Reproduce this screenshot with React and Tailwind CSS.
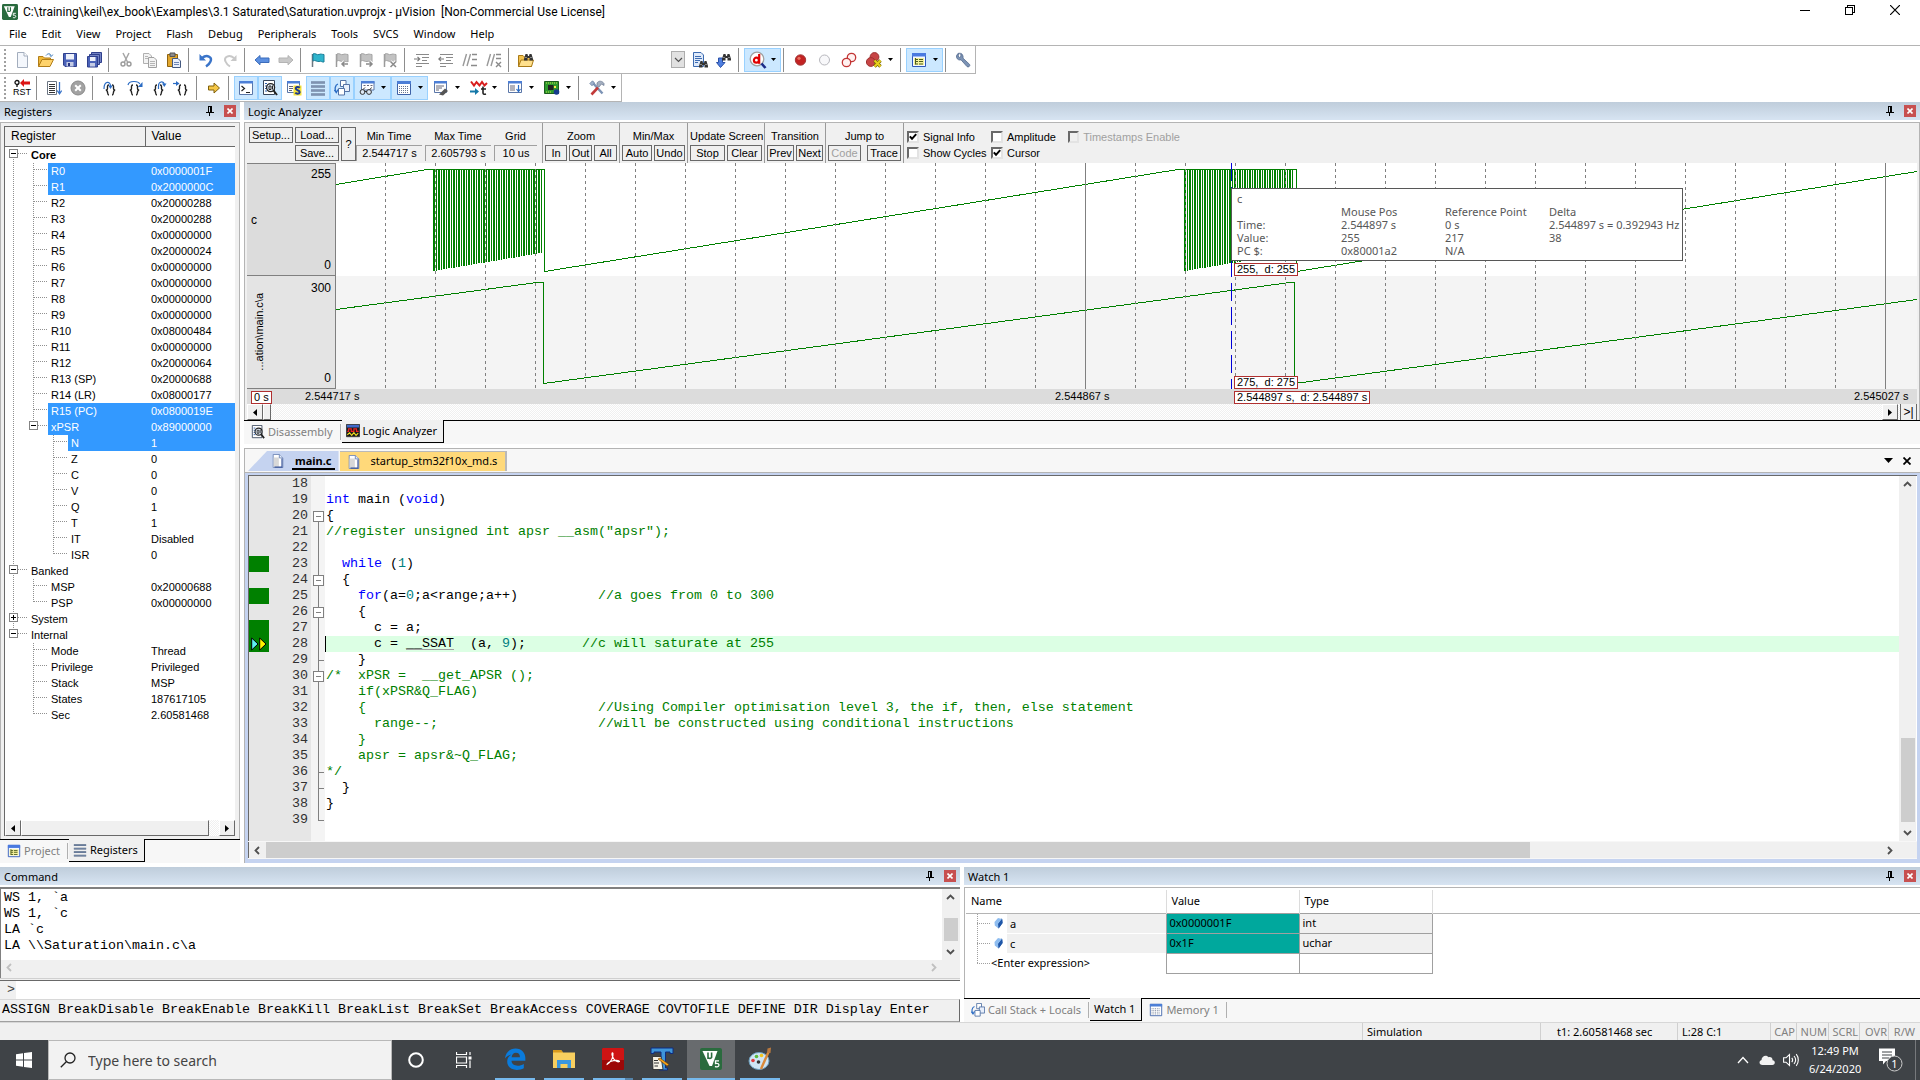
import React from "react";

/* ---------- toolbar icons, 16 x 16 ---------- */

const Svg = ({ children, className = "h-4 w-4" }) => (
  <svg viewBox="0 0 16 16" className={className} fill="none" aria-hidden="true">
    {children}
  </svg>
);

const Flag = ({ dim, mark }) => (
  <Svg>
    <path d="M2.5 2 V15" stroke={dim ? "#9a9a9a" : "#6b7780"} strokeWidth="1.5" />
    <path
      d="M3 2 C5 0.5 7 3.5 9 2.5 C11 1.5 12 2.5 14 2.5 V10 C12 10.5 11 8.5 9 9.5 C7 10 5 7.5 3 9 Z"
      fill={dim ? "#c2c2c2" : "#2fb4cc"}
      stroke={dim ? "#a4a4a4" : "#1c7f99"}
    />
    {mark && <path d={mark} stroke="#fff" strokeWidth="3.5" />}
    {mark && <path d={mark} stroke="#8a8a8a" strokeWidth="1.5" />}
  </Svg>
);

const Lines = ({ arrow }) => (
  <Svg>
    <path d="M2 2.5H15M8 5.5H15M8 8.5H13M2 11.5H15M2 14.5H8" stroke="#8a8a8a" />
    <path d={arrow} stroke="#7a7a7a" strokeWidth="1.2" />
  </Svg>
);

const Braces = ({ arrow, head }) => (
  <svg viewBox="0 0 18 16" className="h-4 w-[18px] shrink-0" fill="none" aria-hidden="true">
    <path
      d="M8 5 C5.5 5 7 8.5 6.3 9.4 C6 9.8 5.5 10 4.8 10 C7.8 10.2 5.5 15 8 15 M11 5 C13.5 5 12 8.5 12.7 9.4 C13 9.8 13.5 10 14.2 10 C11.2 10.2 13.5 15 11 15"
      stroke="#222"
      strokeWidth="1.4"
    />
    <path d={arrow} stroke="#2b6cc4" strokeWidth="1.2" />
    <path d={head} fill="#2b6cc4" />
  </svg>
);

const Binoc = ({ x = 0, y = 0 }) => (
  <g transform={"translate(" + x + " " + y + ")"}>
    <path d="M0 6 L1.5 1 H3.5 L4 3 H5 L5.5 1 H7.5 L9 6 V7.5 H5.5 V5 H3.5 V7.5 H0 Z" fill="#333" />
    <path d="M1.5 4.5 H2.5 M6.5 4.5 H7.5" stroke="#ddd" />
  </g>
);

const I = {
  fresh: (
    <Svg>
      <path d="M3.5 0.5 H10 L13.5 4 V15.5 H3.5 Z" fill="#f4f7fc" stroke="#a3adbd" />
      <path d="M10 0.5 V4 H13.5" stroke="#a3adbd" fill="#fff" />
    </Svg>
  ),
  open: (
    <Svg>
      <path d="M0.5 14.5 V4.5 H5 L6.5 6 H12.5 V8" fill="#f0b93a" stroke="#b17d18" />
      <path d="M0.5 14.5 L4 7.5 H15.5 L12 14.5 Z" fill="#ffd36b" stroke="#b17d18" />
      <path d="M8 3.5 C10 1 12.5 1.5 13 3.5 M11.5 3 L13.2 4.6 L14.8 2.6" stroke="#3c79b8" />
    </Svg>
  ),
  save: (
    <Svg>
      <path d="M1.5 1.5 H14.5 V14.5 H3 L1.5 13 Z" fill="#4a62b8" stroke="#2f3f8c" />
      <path d="M4 2 H12 V7.5 H4 Z" fill="#eef1fa" />
      <path d="M4.5 10 H11.5 V14.5 H4.5 Z" fill="#c4cbe4" />
      <path d="M6 11 H8 V14 H6 Z" fill="#27347f" />
    </Svg>
  ),
  saveAll: (
    <Svg>
      <path d="M5.5 0.5 H15.5 V10.5 H5.5 Z" fill="#7383c4" stroke="#2f3f8c" />
      <path d="M3.5 2.5 H13.5 V12.5 H3.5 Z" fill="#7383c4" stroke="#2f3f8c" />
      <path d="M1.5 4.5 H11.5 V15 H1.5 Z" fill="#4a62b8" stroke="#2f3f8c" />
      <path d="M4 5 H9.5 V9 H4 Z" fill="#eef1fa" />
      <path d="M4 11 H9 V14.5 H4 Z" fill="#c4cbe4" />
    </Svg>
  ),
  cut: (
    <Svg>
      <path d="M5 1 L9.5 10 M11 1 L6.5 10" stroke="#a6a6a6" strokeWidth="1.5" />
      <circle cx="5" cy="12" r="2" stroke="#9a9a9a" strokeWidth="1.4" />
      <circle cx="11" cy="12" r="2" stroke="#9a9a9a" strokeWidth="1.4" />
    </Svg>
  ),
  copy: (
    <Svg>
      <path d="M1.5 1.5 H7 L9.5 4 V11.5 H1.5 Z" fill="#f3f3f3" stroke="#b0b0b0" />
      <path d="M6.5 5.5 H12 L14.5 8 V15.5 H6.5 Z" fill="#f3f3f3" stroke="#a0a0a0" />
      <path d="M8 9.5H13M8 11.5H13M8 13.5H13M3 4.5H6M3 6.5H6" stroke="#b5b5b5" />
    </Svg>
  ),
  paste: (
    <Svg>
      <path d="M1.5 2.5 H11.5 V14.5 H1.5 Z" fill="#e2a72e" stroke="#8f6310" />
      <path d="M4 1 H9 V4.5 H4 Z" fill="#8c8c8c" stroke="#555" />
      <path d="M6.5 6.5 H12 L14.5 9 V15.5 H6.5 Z" fill="#eaf0fb" stroke="#44597f" />
      <path d="M8 10.5H13M8 12.5H13" stroke="#6e86b5" />
    </Svg>
  ),
  undo: (
    <Svg>
      <path d="M4 6 C9 2 14.5 5 12.5 9.5 C11.5 12 9.5 13.5 8 14.5" stroke="#3a74c9" strokeWidth="2.4" />
      <path d="M1.5 2 V8.5 H8 Z" fill="#3a74c9" />
    </Svg>
  ),
  redo: (
    <Svg>
      <path d="M12 6 C7 2 1.5 5 3.5 9.5 C4.5 12 6.5 13.5 8 14.5" stroke="#c8c8c8" strokeWidth="2" />
      <path d="M14.5 3 V9 H8.5 Z" fill="#c8c8c8" />
    </Svg>
  ),
  back: (
    <Svg>
      <path d="M1 8 L6 3.5 V6 H15 V10.5 H6 V12.8 Z" fill="#5b8fe0" stroke="#3b6cbb" />
    </Svg>
  ),
  forward: (
    <Svg>
      <path d="M15 8 L10 3.5 V6 H1 V10.5 H10 V12.8 Z" fill="#c8c8c8" stroke="#b4b4b4" />
    </Svg>
  ),
  flag: <Flag />,
  flagPrev: <Flag dim mark="M14 12 H8 M10.5 9.5 L8 12 L10.5 14.5" />,
  flagNext: <Flag dim mark="M8 12 H14 M11.5 9.5 L14 12 L11.5 14.5" />,
  flagClear: <Flag dim mark="M8.5 9.5 L14 15 M14 9.5 L8.5 15" />,
  indent: <Lines arrow="M0 7 H5.5 M3.5 4.8 L5.7 7 L3.5 9.2" />,
  outdent: <Lines arrow="M0.8 7 H6 M3 4.8 L0.8 7 L3 9.2" />,
  comment: (
    <Svg>
      <path d="M1 14 L4.5 2 M5 14 L8.5 2" stroke="#999" strokeWidth="1.4" />
      <path d="M10 2.5H15M10 7.5H15M9 13.5H15" stroke="#8a8a8a" strokeWidth="1.4" />
    </Svg>
  ),
  uncomment: (
    <Svg>
      <path d="M1 14 L4.5 2 M5 14 L8.5 2" stroke="#999" strokeWidth="1.4" />
      <path d="M10 2.5H15M10 6.5H15M10 10 L15 15 M15 10 L10 15" stroke="#8a8a8a" strokeWidth="1.4" />
    </Svg>
  ),
  findFiles: (
    <Svg>
      <path d="M0.5 14.5 V3.5 H5 L6.5 5 H13.5 V14.5 Z" fill="#f2c14c" stroke="#a97a17" />
      <path d="M0.5 14.5 L3 8 H15.5 L13.5 14.5 Z" fill="#ffe08c" stroke="#a97a17" />
      <Binoc x={6} y={1} />
    </Svg>
  ),
  docFind: (
    <Svg>
      <path d="M1.5 0.5 H9 L11.5 3 V14.5 H1.5 Z" fill="#dfeafa" stroke="#3d6bb0" />
      <path d="M3 4.5H9M3 6.5H10M3 8.5H8M3 10.5H6" stroke="#3d6bb0" />
      <Binoc x={7} y={8} />
    </Svg>
  ),
  nextFind: (
    <Svg>
      <path d="M2.5 6 H6.5 V10.5 H9 L4.5 15.5 L0.5 10.5 H2.5 Z" fill="#4f7fe0" stroke="#2a50a8" />
      <Binoc x={6} y={1} />
    </Svg>
  ),
  debug: (
    <svg viewBox="0 0 18 18" className="h-[18px] w-[18px]" fill="none" aria-hidden="true">
      <circle cx="8" cy="8" r="6.8" fill="#fff" stroke="#a0a0a0" strokeWidth="1.3" />
      <path d="M12.5 12.5 L16.5 17" stroke="#1b2a88" strokeWidth="2.6" />
      <circle cx="7.4" cy="9.2" r="2.5" stroke="#e00000" strokeWidth="2.2" />
      <path d="M10.2 3 V12.8" stroke="#e00000" strokeWidth="2.2" />
    </svg>
  ),
  bpSet: (
    <Svg>
      <circle cx="7.5" cy="8" r="5.2" fill="#c32222" stroke="#a33a3a" />
      <circle cx="6" cy="6.3" r="1.6" fill="#e8705f" />
    </Svg>
  ),
  bpOff: (
    <Svg>
      <circle cx="7.5" cy="8" r="5" fill="#f8f8fa" stroke="#b7b7bd" />
    </Svg>
  ),
  bpAllOff: (
    <Svg>
      <circle cx="10.5" cy="5.5" r="4.2" fill="#fff1f0" stroke="#c23535" strokeWidth="1.3" />
      <circle cx="5.5" cy="10.5" r="4.2" fill="#fff1f0" stroke="#c23535" strokeWidth="1.3" />
    </Svg>
  ),
  bpKill: (
    <Svg>
      <circle cx="8.5" cy="5" r="4.4" fill="#c74545" stroke="#9d3030" />
      <circle cx="4.8" cy="10" r="4.4" fill="#c74545" stroke="#9d3030" />
      <path d="M8.5 8.5 L14.5 14.5 M14.5 8.5 L8.5 14.5" stroke="#7b6a00" strokeWidth="3.4" />
      <path d="M8.5 8.5 L14.5 14.5 M14.5 8.5 L8.5 14.5" stroke="#e8cf1c" strokeWidth="2" />
    </Svg>
  ),
  project: (
    <Svg>
      <path d="M1.5 1.5 H14.5 V14.5 H1.5 Z" fill="#f4f8ff" stroke="#2f58b8" />
      <path d="M1 1 H15 V4.5 H1 Z" fill="#4a7ae0" />
      <path d="M3 6 H13 V13 H3 Z" fill="#f4f19a" />
      <path d="M4.5 6 V12.5 M4.5 7.5 H7 M4.5 9.5 H7 M4.5 12 H7 M8 7.5 H12 M8 9.5 H12 M8 12 H12" stroke="#4d5c20" />
    </Svg>
  ),
  wrench: (
    <Svg>
      <path
        d="M4.5 1 C2.5 1.3 1 3.3 1.6 5.5 C2.2 7.6 4.3 8.4 6 7.8 L12 14.6 C13.4 15.8 15.6 13.8 14.6 12.4 L8 6.2 C8.6 3.8 7 1.6 5.6 1.2 L6 4.4 L4.3 5.4 L3 4 Z"
        fill="#7c93b5"
        stroke="#50678c"
        strokeWidth="0.8"
      />
    </Svg>
  ),
  reset: (
    <span className="flex flex-col items-center">
      <svg viewBox="0 0 16 8" className="h-2 w-4" fill="none" aria-hidden="true">
        <circle cx="3" cy="3.5" r="2" stroke="#111" strokeWidth="1.3" />
        <path d="M3 5 V8" stroke="#111" strokeWidth="1.3" />
        <path d="M6 4 L10 0 V2.5 H16 V5.5 H10 V8 Z" fill="#dc1414" />
      </svg>
      <span className="font-['Liberation_Sans',sans-serif] text-[9px] leading-[10px]">RST</span>
    </span>
  ),
  run: (
    <Svg>
      <path d="M1.5 1.5 H10.5 V14.5 H1.5 Z" fill="#fff" stroke="#6c7683" />
      <path d="M3 4.5H9M3 6.5H9M3 8.5H9M3 10.5H9M3 12.5H9" stroke="#333" />
      <path d="M13.5 2 V13 M11.2 10.5 L13.5 13.8 L15.8 10.5" stroke="#3a74c9" strokeWidth="1.3" />
    </Svg>
  ),
  stop: (
    <Svg>
      <circle cx="8" cy="8" r="7" fill="#a2a2a2" stroke="#8a8a8a" />
      <path d="M5.2 5.2 L10.8 10.8 M10.8 5.2 L5.2 10.8" stroke="#fff" strokeWidth="2" />
    </Svg>
  ),
  stepIn: <Braces arrow="M3 9 C3 0.5 9.5 1 9.5 6" head="M7.3 5.5 H11.7 L9.5 9 Z" />,
  stepOver: <Braces arrow="M3 5 C4 0.5 13 0.5 14.8 4" head="M17.5 2 V7 H12.8 Z" />,
  stepOut: <Braces arrow="M9.5 9 V6 C9.5 1 14.5 1 15.2 4" head="M13 3.5 H17.5 L15.3 7 Z" />,
  stepTo: <Braces arrow="M0 3.5 H4.5" head="M3 1 L6.5 3.5 L3 6 Z" />,
  showNext: (
    <Svg>
      <path d="M2.5 6 H8 V3 L13.5 8 L8 13 V10 H2.5 Z" fill="#f5c746" stroke="#80600c" />
    </Svg>
  ),
  command: (
    <Svg>
      <path d="M1.5 1.5 H14.5 V14.5 H1.5 Z" fill="#fff" stroke="#5a76a8" />
      <path d="M1 1 H15 V3.5 H1 Z" fill="#4d7fd6" />
      <path d="M3.5 6 L6.5 8.5 L3.5 11 M8 12.5 H12" stroke="#222" strokeWidth="1.2" />
    </Svg>
  ),
  disasm: (
    <Svg>
      <path d="M1.5 0.5 H12.5 V14.5 H1.5 Z" fill="#fff" stroke="#39475c" />
      <path d="M3 3.5 H5 M3 6 H5 M3 8.5 H5 M3 11 H5" stroke="#2c5fae" />
      <circle cx="8.6" cy="7.6" r="4" fill="#e9f3ff" stroke="#222" strokeWidth="1.3" />
      <path d="M7 6 H9 V9.5 H7 Z M10.5 5.5 V9.5" stroke="#222" />
      <path d="M11.5 10.5 L15 15" stroke="#222" strokeWidth="2" />
    </Svg>
  ),
  symbols: (
    <Svg>
      <path d="M1.5 1.5 H13.5 V12.5 H1.5 Z" fill="#fff" stroke="#5a76a8" />
      <path d="M1 1 H14 V3.5 H1 Z" fill="#4d7fd6" />
      <path d="M3 6.5H7M3 8.5H7M3 10.5H6" stroke="#667" />
      <path d="M7.5 5.5 H15.5 V15.5 H7.5 Z" fill="#f7e436" />
      <path d="M13.8 7.8 C12.5 6.4 9.6 6.6 9.8 8.7 C10 10.6 13.8 9.8 13.7 12.2 C13.5 14.3 10.5 14.2 9.3 12.7" stroke="#203a90" strokeWidth="2" />
    </Svg>
  ),
  registers: (
    <Svg>
      <path d="M1 2.5H15M1 6.5H15M1 10.5H15M1 14.5H15" stroke="#4a5c7a" strokeWidth="2" />
      <path d="M1 2.5H15M1 6.5H15M1 10.5H15M1 14.5H15" stroke="#8da0c0" strokeWidth="0.8" />
    </Svg>
  ),
  callStack: (
    <Svg>
      <path d="M6.5 0.5 H12 V6.5 H6.5 Z" fill="#fff" stroke="#5473a5" />
      <path d="M9.5 4.5 H15.5 V11.5 H9.5 Z" fill="#e8effb" stroke="#5473a5" />
      <path d="M4.5 8.5 H10.5 V15 H4.5 Z" fill="#fff" stroke="#5473a5" />
      <path d="M4 4 C1 5 0.5 9 2 12 M0.3 9.8 L2.3 12.6 L4 9.6" stroke="#2b6cc4" strokeWidth="1.3" />
    </Svg>
  ),
  watch: (
    <Svg>
      <path d="M2.5 1.5 H15 V10 H2.5 Z" fill="#fff" stroke="#5a76a8" />
      <path d="M2 1 H15.5 V3.5 H2 Z" fill="#4d7fd6" />
      <path d="M4.5 5.5H6.5M8 5.5H10M11.5 5.5H13.5" stroke="#667" />
      <circle cx="3.5" cy="12" r="2.4" fill="#dde8f5" stroke="#333" />
      <circle cx="10" cy="12" r="2.4" fill="#dde8f5" stroke="#333" />
      <path d="M5.5 11.5 H8 M4 9.5 L6 7.5 M11 9.5 L12.5 7.5" stroke="#333" />
    </Svg>
  ),
  memory: (
    <Svg>
      <path d="M1.5 1.5 H14.5 V14.5 H1.5 Z" fill="#fff" stroke="#3e62a8" />
      <path d="M1 1 H15 V4 H1 Z" fill="#4d7fd6" />
      <path d="M3 6.5H13M3 8.5H13M3 10.5H13M3 12.5H13" stroke="#6b7890" strokeDasharray="1 1" />
    </Svg>
  ),
  serial: (
    <Svg>
      <path d="M1.5 1.5 H13.5 V12.5 H1.5 Z" fill="#fff" stroke="#5a76a8" />
      <path d="M1 1 H14 V3.5 H1 Z" fill="#4d7fd6" />
      <path d="M3 6H11M3 8H9M3 10H6" stroke="#667" />
      <path d="M6 14.5 L12 8.5 L15 11 L10 15.5 Z" fill="#555" />
    </Svg>
  ),
  analysis: (
    <svg viewBox="0 0 18 16" className="h-4 w-[18px]" fill="none" aria-hidden="true">
      <path d="M1 1.5 L4 5.5 L6.5 2 L9.5 5.5 L12 2 L14.5 5.5 L17 3" stroke="#d81e1e" strokeWidth="2" />
      <path d="M0 11.5 H6" stroke="#1578a8" strokeWidth="2" />
      <path d="M5 8 L9 11.5 L5 15 Z" fill="#1578a8" />
      <path d="M13 6.5 V13 C13 14.5 14.5 14.5 16 14 M11 9 H16" stroke="#222" strokeWidth="1.6" />
    </svg>
  ),
  trace: (
    <Svg>
      <path d="M1.5 1.5 H14.5 V12.5 H1.5 Z" fill="#fff" stroke="#5a76a8" />
      <path d="M1 1 H15 V3.5 H1 Z" fill="#4d7fd6" />
      <path d="M3 6H8M3 8H8M3 10H8" stroke="#667" />
      <path d="M11.5 5 V11 M9.5 9 L11.5 11.5 L13.5 9" stroke="#2b6cc4" strokeWidth="1.2" />
    </Svg>
  ),
  system: (
    <Svg>
      <path d="M0.5 1.5 H14.5 V13.5 H0.5 Z" fill="#2d9a2d" stroke="#1c5c1c" />
      <path d="M4 5 H9.5 V10 H4 Z" fill="#222" />
      <path d="M2 3H13M2 12H8" stroke="#c7e04b" strokeDasharray="1 1" />
      <path d="M11 6 V8" stroke="#ffe94a" strokeWidth="2" />
      <circle cx="12.5" cy="12" r="2.8" fill="#163b8c" />
    </Svg>
  ),
  tools: (
    <Svg>
      <path d="M3 2 L13.5 13.5" stroke="#7c93b5" strokeWidth="2.4" />
      <path d="M0.8 3.5 L3.5 0.8 L5.5 3 L3 5.8 Z" fill="#9fb2cd" stroke="#60789b" strokeWidth="0.7" />
      <path d="M2.5 14.5 L9 7.5" stroke="#c23a3a" strokeWidth="2.6" />
      <path d="M8 3 C9.5 0.5 13 0.5 15 3.5 L15 5.5 L12.5 4 L9.8 7.2 L8 5.4 Z" fill="#a4afc0" stroke="#68778f" strokeWidth="0.7" />
    </Svg>
  ),
  analyzer: (
    <Svg>
      <path d="M0.5 0.5 H15.5 V14.5 H0.5 Z" fill="#1a1a1a" stroke="#333" />
      <path d="M1 1 H15 V4 H1 Z" fill="#3f68c9" />
      <path d="M1.5 8.5 H3 V5.5 H6 V8.5 H9 V5.5 H12 V8.5 H14.5" stroke="#f02020" strokeWidth="1.3" />
      <path d="M1.5 12.5 L4 10 L6.5 13 L9 10 L11.5 13 L14 10.5" stroke="#f2e01e" strokeWidth="1.3" />
    </Svg>
  ),
  page: (
    <Svg>
      <path d="M2.5 0.5 H9.5 L13.5 4.5 V15.5 H2.5 Z" fill="#fff" stroke="#6b83b5" />
      <path d="M3 4 H9 V15 H3 Z" fill="#d8d8d8" />
      <path d="M9.5 0.5 V4.5 H13.5" fill="#e5ecf8" stroke="#6b83b5" />
      <path d="M12.5 5 V15 H4" stroke="#39549a" strokeWidth="1.2" />
    </Svg>
  ),
};

/* ---------- shared parts ---------- */

const chevrons = { up: "M1 6 L4.5 2.5 L8 6", down: "M1 3 L4.5 6.5 L8 3", left: "M6 1 L2.5 4.5 L6 8", right: "M3 1 L6.5 4.5 L3 8" };
const Chevron = ({ dir, color = "#505050", width = "1.8" }) => (
  <svg viewBox="0 0 9 9" className="h-[9px] w-[9px] shrink-0" fill="none" aria-hidden="true">
    <path d={chevrons[dir]} stroke={color} strokeWidth={width} />
  </svg>
);

const Sep = () => (
  <span className="flex h-6 w-2 shrink-0 pl-0.5">
    <span className="w-px bg-[#8d8d8d]" />
  </span>
);

const Grip = () => (
  <span className="h-[22px] w-2.5 shrink-0 bg-[repeating-linear-gradient(#a0a0a0_0_2px,transparent_2px_4px)] bg-[length:2px_4px] bg-[position:4px_0] bg-repeat-y" />
);

const FindBox = () => (
  <span className="relative mr-[3px] flex">
    <select
      aria-label="Find"
      className="h-[17px] w-[147px] appearance-none bg-white bg-[linear-gradient(#e1e1e1,#e1e1e1)] bg-[length:14px_18px] bg-right bg-no-repeat"
    />
    <span className="pointer-events-none absolute right-0 top-0 flex h-[17px] w-3.5 items-center justify-center border border-[#adadad]">
      <Chevron dir="down" width="1.2" />
    </span>
  </span>
);

const Tool = ({ icon, label, on, menu }) => (
  <button
    type="button"
    aria-label={label}
    className={
      (on ? "border-[#99d1ff] bg-[#cce8ff] " : "border-transparent ") +
      (menu ? "w-[37px] justify-between pl-1 pr-1 " : "w-6 justify-center ") +
      "flex h-6 shrink-0 items-center border"
    }
  >
    {I[icon]}
    {menu && (
      <svg viewBox="0 0 5 3" className="h-[3px] w-[5px]" aria-hidden="true">
        <path d="M0 0 H5 L2.5 3 Z" fill="#000" />
      </svg>
    )}
  </button>
);

const Toolbar = ({ items }) => (
  <div className="flex h-7 w-fit items-center border-b border-r border-[#b4b4b4] bg-white">
    <Grip />
    {items.map((it, i) =>
      it === "|" ? (
        <Sep key={i} />
      ) : it === "combo" ? (
        <FindBox key={i} />
      ) : (
        <Tool key={i} icon={it[0]} label={it[1]} on={it[2] && it[2].includes("o")} menu={it[2] && it[2].includes("m")} />
      )
    )}
  </div>
);

const fileTools = [
  ["fresh", "New"], ["open", "Open"], ["save", "Save"], ["saveAll", "Save all"], "|",
  ["cut", "Cut"], ["copy", "Copy"], ["paste", "Paste"], "|",
  ["undo", "Undo"], ["redo", "Redo"], "|",
  ["back", "Back"], ["forward", "Forward"], "|",
  ["flag", "Toggle bookmark"], ["flagPrev", "Previous bookmark"], ["flagNext", "Next bookmark"], ["flagClear", "Clear bookmarks"], "|",
  ["indent", "Indent"], ["outdent", "Unindent"], ["comment", "Comment"], ["uncomment", "Uncomment"], "|",
  ["findFiles", "Find in files"], "combo", ["docFind", "Find"], ["nextFind", "Incremental find"], "|",
  ["debug", "Debug session", "om"], "|",
  ["bpSet", "Insert breakpoint"], ["bpOff", "Disable breakpoint"], ["bpAllOff", "Disable all breakpoints"], ["bpKill", "Kill breakpoints", "m"], "|",
  ["project", "Project window", "om"], "|",
  ["wrench", "Configuration"],
];

const debugTools = [
  ["reset", "Reset"], "|",
  ["run", "Run"], ["stop", "Stop"], "|",
  ["stepIn", "Step"], ["stepOver", "Step over"], ["stepOut", "Step out"], ["stepTo", "Run to cursor"], "|",
  ["showNext", "Show next statement"], "|",
  ["command", "Command window", "o"], ["disasm", "Disassembly window", "o"], ["symbols", "Symbols window"],
  ["registers", "Registers window", "o"], ["callStack", "Call stack window", "o"],
  ["watch", "Watch windows", "om"], ["memory", "Memory windows", "om"], ["serial", "Serial windows", "m"],
  ["analysis", "Analysis windows", "m"], ["trace", "Trace windows", "m"], ["system", "System viewer", "m"], "|",
  ["tools", "Toolbox", "m"],
];

const DockHead = ({ title }) => (
  <div className="flex h-[18px] shrink-0 items-center bg-linear-to-b from-[#bfcddb] to-[#d7e4f2] pl-1 pr-1">
    <h2 className="pt-0.5 text-[11px] leading-4">{title}</h2>
    <button type="button" aria-label={"Auto hide " + title} className="ml-auto mr-2.5 h-3 w-2">
      <svg viewBox="0 0 8 10" className="h-2.5 w-2" fill="none" shapeRendering="crispEdges" aria-hidden="true">
        <path d="M2 0.5 H6 M2.5 0 V6 M5.5 0 V6 M4.5 0 V6 M0 6.5 H8 M3.5 7 V10" stroke="#000" />
      </svg>
    </button>
    <button type="button" aria-label={"Close " + title} className="flex h-3 w-3 items-center justify-center bg-[#c75050]">
      <svg viewBox="0 0 6 6" className="h-1.5 w-1.5" aria-hidden="true">
        <path d="M0.5 0.5 L5.5 5.5 M5.5 0.5 L0.5 5.5" stroke="#fff" strokeWidth="1.6" />
      </svg>
    </button>
  </div>
);

/* Strip of tabs below a docked pane; the active tab hangs from the black line. */
const DockTabs = ({ tabs }) => (
  <div className="flex h-6 shrink-0 bg-[#f7f7f7]" role="tablist">
    {tabs.map(([icon, label, active]) => (
      <button
        key={label}
        type="button"
        role="tab"
        aria-selected={!!active}
        className={
          (active
            ? "h-[23px] border-b border-r border-black bg-[#f0f0f0] pl-1 pr-1.5 "
            : "border-t border-black pb-px pl-[7px] pr-px text-[#808080] ") +
          "flex items-center gap-[3px] text-[11px] leading-4 [&>svg]:h-3.5 [&>svg]:w-3.5"
        }
      >
        {icon && I[icon]}
        {label}
        {!active && <span className="ml-1 h-4 w-px bg-[#b0b0b0]" />}
      </button>
    ))}
    <span className="grow border-t border-black" />
  </div>
);

const Tri = ({ dir }) => (
  <svg viewBox="0 0 4 7" className="h-[7px] w-1" aria-hidden="true">
    <path d={dir === "left" ? "M4 0 V7 L0 3.5 Z" : "M0 0 V7 L4 3.5 Z"} fill="#000" />
  </svg>
);

const classicBtn = "flex h-4 w-4 shrink-0 items-center justify-center border border-b-[#696969] border-l-white border-r-[#696969] border-t-white bg-[#f0f0f0]";
const classicTrack = "flex h-4 shrink-0 bg-[repeating-conic-gradient(#ffffff_0_25%,#f0f0f0_0_50%)] bg-[length:2px_2px]";

/* ---------- registers ---------- */

/* name, value, depth, options: s = changed, x = expander sign, bars = guide columns that run through, end = last child */
const regs = [
  ["Core", "", 1, { x: "-", bars: [], top: true }],
  ["R0", "0x0000001F", 2, { s: true, bars: [0] }],
  ["R1", "0x2000000C", 2, { s: true, bars: [0] }],
  ["R2", "0x20000288", 2, { bars: [0] }],
  ["R3", "0x20000288", 2, { bars: [0] }],
  ["R4", "0x00000000", 2, { bars: [0] }],
  ["R5", "0x20000024", 2, { bars: [0] }],
  ["R6", "0x00000000", 2, { bars: [0] }],
  ["R7", "0x00000000", 2, { bars: [0] }],
  ["R8", "0x00000000", 2, { bars: [0] }],
  ["R9", "0x00000000", 2, { bars: [0] }],
  ["R10", "0x08000484", 2, { bars: [0] }],
  ["R11", "0x00000000", 2, { bars: [0] }],
  ["R12", "0x20000064", 2, { bars: [0] }],
  ["R13 (SP)", "0x20000688", 2, { bars: [0] }],
  ["R14 (LR)", "0x08000177", 2, { bars: [0] }],
  ["R15 (PC)", "0x0800019E", 2, { s: true, bars: [0] }],
  ["xPSR", "0x89000000", 2, { s: true, x: "-", bars: [0], end: true }],
  ["N", "1", 3, { s: true, bars: [0] }],
  ["Z", "0", 3, { bars: [0] }],
  ["C", "0", 3, { bars: [0] }],
  ["V", "0", 3, { bars: [0] }],
  ["Q", "1", 3, { bars: [0] }],
  ["T", "1", 3, { bars: [0] }],
  ["IT", "Disabled", 3, { bars: [0] }],
  ["ISR", "0", 3, { bars: [0], end: true }],
  ["Banked", "", 1, { x: "-", bars: [] }],
  ["MSP", "0x20000688", 2, { bars: [0] }],
  ["PSP", "0x00000000", 2, { bars: [0], end: true }],
  ["System", "", 1, { x: "+", bars: [] }],
  ["Internal", "", 1, { x: "-", bars: [], end: true }],
  ["Mode", "Thread", 2, { bars: [] }],
  ["Privilege", "Privileged", 2, { bars: [] }],
  ["Stack", "MSP", 2, { bars: [] }],
  ["States", "187617105", 2, { bars: [] }],
  ["Sec", "2.60581468", 2, { bars: [], end: true }],
];

const guideWidth = ["", "w-[23px]", "w-[43px]", "w-[63px]"];

const Guides = ({ depth, opt }) => {
  const w = depth * 20 + 3;
  const x = depth * 20 - 12 + 0.5;
  return (
    <svg viewBox={"0 0 " + w + " 16"} className={guideWidth[depth] + " h-4 shrink-0"} fill="none" shapeRendering="crispEdges" aria-hidden="true">
      <g stroke="#909090" strokeDasharray="1 1">
        {opt.bars.map((b) => (
          <path key={b} d={"M" + (b * 20 + 8.5) + " 0 V16"} />
        ))}
        <path d={"M" + x + " " + (opt.top ? 8 : 0) + " V" + (opt.end ? 7 : 16)} />
        <path d={"M" + x + " 6.5 H" + w} />
      </g>
      {opt.x && (
        <g>
          <rect x={x - 4} y="2.5" width="8" height="8" fill="#fff" stroke="#848484" />
          <path d={"M" + (x - 2.5) + " 6.5 H" + (x + 2.5) + (opt.x === "+" ? " M" + x + " 4 V9" : "")} stroke="#000" />
        </g>
      )}
    </svg>
  );
};

const Registers = () => (
  <section className="flex w-60 shrink-0 flex-col">
    <DockHead title="Registers" />
    <div className="mt-0.5 flex min-h-0 grow flex-col border border-b-0 border-[#b4b4b4] bg-[#f0f0f0] pl-[3px] pr-1 pt-[3px] font-['Liberation_Sans',sans-serif] text-[11px]">
      <div className="flex min-h-0 grow flex-col border-l border-t border-[#696969] bg-white">
        <table className="w-full table-fixed border-collapse">
          <colgroup>
            <col className="w-[140px]" />
            <col />
          </colgroup>
          <thead>
            <tr className="h-[19px] bg-[#f0f0f0] text-left text-xs">
              <th className="border-b border-r border-[#696969] pl-1.5 font-normal leading-[18px]">Register</th>
              <th className="border-b border-[#696969] pl-1.5 font-normal leading-[18px]">Value</th>
            </tr>
          </thead>
          <tbody>
            {regs.map(([name, value, depth, opt]) => (
              <tr key={name} className={opt.s ? "text-white" : ""}>
                <td className="p-0">
                  <div className="flex h-4">
                    <Guides depth={depth} opt={opt} />
                    <span className={(opt.s ? "bg-[#3399ff] " : "") + (name === "Core" ? "font-bold " : "") + "grow pl-[3px] leading-4"}>{name}</span>
                  </div>
                </td>
                <td className={(opt.s ? "bg-[#3399ff] " : "") + "p-0 pl-1.5 leading-4"}>{value}</td>
              </tr>
            ))}
          </tbody>
        </table>
        <div className={classicTrack + " mt-auto"}>
          <button type="button" aria-label="Scroll left" className={classicBtn}>
            <Tri dir="left" />
          </button>
          <span className="mr-2.5 grow border border-b-[#696969] border-l-white border-r-[#696969] border-t-white bg-[#f0f0f0]" />
          <button type="button" aria-label="Scroll right" className={classicBtn}>
            <Tri dir="right" />
          </button>
        </div>
      </div>
      <span className="h-[3px] shrink-0" />
    </div>
    <DockTabs tabs={[["project", "Project"], ["registers", "Registers", true]]} />
  </section>
);

/* ---------- logic analyzer ---------- */

const Btn = ({ children, className, disabled }) => (
  <button type="button" disabled={disabled} className={className + " h-4 border border-[#696969] text-center leading-[14px] disabled:text-[#a0a0a0]"}>
    {children}
  </button>
);

const Group = ({ title, children, className }) => (
  <div className={className + " flex shrink-0 flex-col pt-[5px]"}>
    <span className="whitespace-nowrap text-center leading-[17px]">{title}</span>
    <div className="flex justify-center gap-0.5">{children}</div>
  </div>
);

const Field = ({ title, value, className }) => (
  <Group title={title} className={className}>
    <output className="h-4 grow border-l border-t border-[#a0a0a0] text-center leading-[14px]">{value}</output>
  </Group>
);

const Check = ({ label, checked, disabled }) => (
  <label className={"flex h-4 items-center gap-1 whitespace-nowrap " + (disabled ? "text-[#a0a0a0]" : "")}>
    <input type="checkbox" defaultChecked={checked} disabled={disabled} className="peer hidden" />
    <span className="flex h-3 w-3 items-center justify-center border-2 border-b-[#e3e3e3] border-l-[#696969] border-r-[#e3e3e3] border-t-[#696969] bg-white peer-disabled:bg-[#f0f0f0]">
      {checked && (
        <svg viewBox="0 0 8 8" className="h-2 w-2" fill="none" aria-hidden="true">
          <path d="M0.8 3.4 L3 5.8 L7.2 1.2" stroke="#000" strokeWidth="2" />
        </svg>
      )}
    </span>
    {label}
  </label>
);

const VLine = () => <span className="mx-0.5 w-px shrink-0 bg-[#9a9a9a]" />;

const gridLines = Array.from({ length: 31 }, (_, i) => 49 + i * 50);
const burst = (x0) => Array.from({ length: 44 }, (_, i) => [x0 + i * 2.5, 108 - i * 0.42]);

const Plot = () => (
  <svg viewBox="0 0 1581 226" preserveAspectRatio="none" className="h-[226px] w-full" fill="none" shapeRendering="crispEdges" aria-hidden="true">
    <rect width="1581" height="113" fill="#fff" />
    <rect y="113" width="1581" height="113" fill="#f4f4f4" />
    <g stroke="#008000">
      <path d="M0 21.5 L91 6.5 H208.5 V108.5 L842 6.5 H960.5 V108.5 L1581 8.5" />
      <path d="M0 146.5 L201 119.5 H207.5 V220.5 L954 119.5 H958.5 V220.5 L1581 136.5" />
      <path d={burst(98).concat(burst(849)).map(([x, y]) => "M" + x + " 6 V" + y).join(" ")} strokeWidth="1.5" />
    </g>
    {gridLines.map((x) => (
      <path key={x} d={"M" + (x + 0.5) + " 0 V226"} stroke="#808080" strokeDasharray={x === 749 || x === 1549 ? "none" : "3 3"} />
    ))}
    <path d="M895.5 0 V226" stroke="#0000d8" strokeDasharray="18 6" />
  </svg>
);

const marker = "absolute whitespace-pre border border-[#b03030] bg-white px-0.5 text-[11px] leading-[11px]";

const tipRows = [
  ["Time:", "2.544897 s", "0 s", "2.544897 s = 0.392943 Hz"],
  ["Value:", "255", "217", "38"],
  ["PC $:", "0x80001a2", "N/A", ""],
];

const LogicAnalyzer = () => (
  <section className="flex shrink-0 flex-col">
    <DockHead title="Logic Analyzer" />
    <div className="mt-0.5 border border-b-0 border-[#b4b4b4] bg-[#f0f0f0] px-0.5 font-['Liberation_Sans',sans-serif] text-[11px]">
      <div className="flex h-10 pl-0.5">
        <div className="flex shrink-0 gap-0.5 pt-1">
          <Btn className="w-11">Setup...</Btn>
          <div className="flex flex-col gap-0.5">
            <Btn className="w-11">Load...</Btn>
            <Btn className="w-11">Save...</Btn>
          </div>
          <button type="button" className="h-[34px] w-[15px] border border-[#696969] text-center">?</button>
        </div>
        <Field title="Min Time" value="2.544717 s" className="mr-[3px] w-[66px]" />
        <Field title="Max Time" value="2.605793 s" className="mr-[3px] w-[66px]" />
        <Field title="Grid" value="10 us" className="mr-[3px] w-[43px]" />
        <VLine />
        <Group title="Zoom" className="w-[72px]">
          <Btn className="w-[22px]">In</Btn>
          <Btn className="w-[23px]">Out</Btn>
          <Btn className="w-[23px]">All</Btn>
        </Group>
        <VLine />
        <Group title="Min/Max" className="w-[63px]">
          <Btn className="w-[30px]">Auto</Btn>
          <Btn className="w-[31px]">Undo</Btn>
        </Group>
        <VLine />
        <Group title="Update Screen" className="w-[72px]">
          <Btn className="w-[35px]">Stop</Btn>
          <Btn className="w-[35px]">Clear</Btn>
        </Group>
        <VLine />
        <Group title="Transition" className="w-14">
          <Btn className="w-[27px]">Prev</Btn>
          <Btn className="w-[27px]">Next</Btn>
        </Group>
        <VLine />
        <Group title="Jump to" className="w-[73px]">
          <Btn className="mr-1 w-[33px]" disabled>Code</Btn>
          <Btn className="w-[34px]">Trace</Btn>
        </Group>
        <VLine />
        <div className="grid shrink-0 auto-rows-[16px] grid-cols-[84px_77px_112px] pl-px pt-1.5">
          <Check label="Signal Info" checked />
          <Check label="Amplitude" />
          <Check label="Timestamps Enable" disabled />
          <Check label="Show Cycles" />
          <Check label="Cursor" checked />
        </div>
      </div>
      <div className="relative flex">
        <div className="flex w-[89px] shrink-0 flex-col border-r border-[#808080] text-xs">
          <div className="flex h-[113px] items-center justify-between border-b border-t border-[#808080] bg-[#dcdcdc] pl-1 pr-1">
            <span>c</span>
            <div className="flex h-full flex-col items-end justify-between pb-0.5 pt-0.5">
              <span>255</span>
              <span>0</span>
            </div>
          </div>
          <div className="flex h-[113px] items-center justify-between border-b border-[#808080] bg-[#e4e4e4] pl-1 pr-1">
            <span className="rotate-180 text-[11px] leading-4 [writing-mode:vertical-rl]">...ation\main.c\a</span>
            <div className="flex h-full flex-col items-end justify-between pb-0.5 pt-1">
              <span>300</span>
              <span>0</span>
            </div>
          </div>
        </div>
        <div className="relative min-w-0 grow">
          <Plot />
          <span className={marker + " left-[898px] top-[100px]"}>255,  d: 255</span>
          <span className={marker + " left-[898px] top-[213px]"}>275,  d: 275</span>
          <div className="absolute left-[895px] top-[25px] w-[452px] border border-[#575757] bg-white pb-[3px] pl-[5px] pt-[3px] font-['Noto_Sans',sans-serif] text-[11px] leading-[13px] text-[#575757]">
            <p>c</p>
            <table className="w-full table-fixed border-collapse text-left">
              <colgroup>
                <col className="w-[104px]" />
                <col className="w-[104px]" />
                <col className="w-[104px]" />
                <col />
              </colgroup>
              <thead>
                <tr>
                  {["", "Mouse Pos", "Reference Point", "Delta"].map((h) => (
                    <th key={h} className="p-0 font-normal">{h}</th>
                  ))}
                </tr>
              </thead>
              <tbody>
                {tipRows.map((r) => (
                  <tr key={r[0]}>
                    {r.map((cell, i) => (
                      <td key={i} className="whitespace-nowrap p-0">{cell}</td>
                    ))}
                  </tr>
                ))}
              </tbody>
            </table>
          </div>
        </div>
      </div>
      <div className="relative h-[15px] bg-[#dcdcdc] leading-[15px]">
        <span className={marker + " left-[4px] top-0.5"}>0 s</span>
        <span className="absolute left-[58px]">2.544717 s</span>
        <span className="absolute left-[808px]">2.544867 s</span>
        <span className="absolute left-[1607px]">2.545027 s</span>
        <span className={marker + " left-[987px] top-0.5"}>2.544897 s,  d: 2.544897 s</span>
      </div>
      <div className={classicTrack}>
        <button type="button" aria-label="Scroll left" className={classicBtn}>
          <Tri dir="left" />
        </button>
        <span className="w-2 border border-b-[#696969] border-l-white border-r-[#696969] border-t-white bg-[#f0f0f0]" />
        <button type="button" aria-label="Scroll right" className={classicBtn + " ml-auto mr-0.5"}>
          <Tri dir="right" />
        </button>
        <button type="button" className="flex w-[17px] items-center justify-center border-l border-r border-[#696969] bg-[#f0f0f0] text-xs">&gt;|</button>
      </div>
    </div>
    <DockTabs tabs={[["disasm", "Disassembly"], ["analyzer", "Logic Analyzer", true]]} />
  </section>
);

/* ---------- editor ---------- */

const K = ({ children }) => <span className="text-[#0000ff]">{children}</span>;
const N = ({ children }) => <span className="text-[#008080]">{children}</span>;
const C = ({ children }) => <span className="text-[#008000]">{children}</span>;

/* line number, content, fold shape, breakpoint margin */
const lines = [
  [18, "", ""],
  [19, <><K>int</K> main (<K>void</K>)</>, ""],
  [20, "{", "first"],
  [21, <C>{'//register unsigned int apsr __asm("apsr");'}</C>, "bar"],
  [22, "", "bar"],
  [23, <>{"  "}<K>while</K> (<N>1</N>)</>, "bar", "mark"],
  [24, "  {", "box"],
  [25, <>{"    "}<K>for</K>(a=<N>0</N>{";a<range;a++)          "}<C>//a goes from 0 to 300</C></>, "bar", "mark"],
  [26, "    {", "box"],
  [27, "      c = a;", "bar", "mark"],
  [28, <>{"      c = "}<span className="underline decoration-[#a0a0a0] underline-offset-2">__SSAT</span>{"  (a, "}<N>9</N>{");       "}<C>//c will saturate at 255</C></>, "bar", "here"],
  [29, "    }", "tick"],
  [30, <C>{"/*  xPSR =  __get_APSR ();"}</C>, "box"],
  [31, <C>{"    if(xPSR&Q_FLAG)"}</C>, "bar"],
  [32, <C>{"    {                             //Using Compiler optimisation level 3, the if, then, else statement"}</C>, "bar"],
  [33, <C>{"      range--;                    //will be constructed using conditional instructions"}</C>, "bar"],
  [34, <C>{"    }"}</C>, "bar"],
  [35, <C>{"    apsr = apsr&~Q_FLAG;"}</C>, "bar"],
  [36, <C>{"*/"}</C>, "tick"],
  [37, "  }", "tick"],
  [38, "}", "bar"],
  [39, "", "end"],
];

const foldPath = { bar: "M7.5 0 V16", tick: "M7.5 0 V16 M8 8.5 H13", end: "M7.5 0 V8.5 H13", box: "M7.5 0 V16", first: "M7.5 8 V16", "": "" };

const Fold = ({ kind }) => (
  <svg viewBox="0 0 14 16" className="h-4 w-3.5 shrink-0" fill="none" shapeRendering="crispEdges" aria-hidden="true">
    <path d={foldPath[kind]} stroke="#808080" />
    {(kind === "box" || kind === "first") && (
      <g stroke="#808080">
        <rect x="2.5" y="3.5" width="10" height="10" fill="#fff" />
        <path d="M5 8.5 H10" />
      </g>
    )}
  </svg>
);

const Editor = () => (
  <section className="mt-1 flex min-h-0 grow flex-col border-l border-t border-[#b4b4b4] bg-[#f7f7f7]">
    <div className="flex h-6 shrink-0 items-end border-b border-[#b4b4b4] pb-px pr-[9px]">
      <button type="button" role="tab" aria-selected="true" className="flex h-5 items-center gap-[7px] bg-[#c5d3f0] pl-[26px] pr-1 text-[11px] font-bold [clip-path:polygon(22px_0,100%_0,100%_100%,3px_100%)] [&>svg]:h-3.5 [&>svg]:w-3.5">
        {I.page}
        <span className="border-b-2 border-black px-[3px] leading-[15px]">main.c</span>
      </button>
      <button type="button" role="tab" aria-selected="false" className="ml-px flex h-5 items-center gap-2.5 border-r-2 border-t border-[#b9b9b9] bg-[#ffd97a] pl-[7px] pr-2 text-[11px] [&>svg]:h-3.5 [&>svg]:w-3.5">
        {I.page}
        startup_stm32f10x_md.s
      </button>
      <button type="button" aria-label="Open files" className="mb-2 ml-auto">
        <svg viewBox="0 0 9 5" className="h-[5px] w-[9px]" aria-hidden="true">
          <path d="M0 0 H9 L4.5 5 Z" fill="#000" />
        </svg>
      </button>
      <button type="button" aria-label="Close file" className="mb-1.5 ml-2.5">
        <svg viewBox="0 0 8 8" className="h-2 w-2" aria-hidden="true">
          <path d="M0.5 0.5 L7.5 7.5 M7.5 0.5 L0.5 7.5" stroke="#000" strokeWidth="1.8" />
        </svg>
      </button>
    </div>
    <div className="flex min-h-0 grow flex-col border-[3px] border-b-4 border-t-2 border-[#c5d3f0]">
      <div className="flex min-h-0 grow border-l border-t border-[#696969] bg-white">
        <div className="min-w-0 grow overflow-hidden bg-[linear-gradient(to_right,#e6e6e6_0_62px,#f4f4f4_62px_76px,#fff_76px)] font-['Liberation_Mono',monospace] text-[10pt]">
          {lines.map(([n, text, fold, mark]) => (
            <div key={n} className="flex h-4 leading-4">
              <span className={(mark ? "bg-[#008000] " : "") + "flex w-5 shrink-0 items-center justify-center"}>
                {mark === "here" && (
                  <svg viewBox="0 0 16 14" className="h-3.5 w-4" aria-hidden="true">
                    <path d="M0.7 1 L7 7 L0.7 13 Z" fill="#5ff0f0" stroke="#000" />
                    <path d="M8.7 1 L15 7 L8.7 13 Z" fill="#fff200" stroke="#000" />
                  </svg>
                )}
              </span>
              <span className="w-[39px] shrink-0 text-right text-[#303030]">{n}</span>
              <span className="ml-[3px] flex shrink-0">
                <Fold kind={fold} />
              </span>
              <code className={(mark === "here" ? "border-l border-black bg-[#dcffe4] " : "pl-px ") + "grow whitespace-pre font-['Liberation_Mono',monospace]"}>{text}</code>
            </div>
          ))}
        </div>
        <div className="mr-px flex w-[17px] shrink-0 flex-col items-center bg-[#f0f0f0] py-1">
          <Chevron dir="up" />
          <span className="mt-auto h-[84px] w-3.5 bg-[#cdcdcd]" />
          <span className="mt-1.5">
            <Chevron dir="down" />
          </span>
        </div>
      </div>
      <div className="mb-px mt-px flex h-4 shrink-0 items-center border-l border-[#696969] bg-[#f0f0f0] pl-1 pr-[23px]">
        <Chevron dir="left" />
        <span className="ml-1 h-4 w-[77%] bg-[#cdcdcd]" />
        <span className="ml-auto">
          <Chevron dir="right" />
        </span>
      </div>
    </div>
  </section>
);

/* ---------- command and watch ---------- */

const Command = () => (
  <section className="flex w-1/2 shrink-0 flex-col">
    <DockHead title="Command" />
    <div className="mt-0.5 flex min-h-0 grow flex-col bg-[#f0f0f0] font-['Liberation_Mono',monospace] text-[10pt]">
      <div className="flex grow flex-col border-l border-t-2 border-[#808080]">
        <div className="flex grow">
          <pre className="grow bg-white pl-[3px] pt-px font-['Liberation_Mono',monospace] leading-4">{"WS 1, `a\nWS 1, `c\nLA `c\nLA \\\\Saturation\\main.c\\a"}</pre>
          <div className="mr-px flex w-[17px] flex-col items-center py-1">
            <Chevron dir="up" />
            <span className="mt-4 h-[23px] w-3.5 bg-[#cdcdcd]" />
            <span className="mt-auto">
              <Chevron dir="down" />
            </span>
          </div>
        </div>
        <div className="flex h-[18px] items-center justify-between pb-1 pl-1 pr-[22px]">
          <Chevron dir="left" color="#c0c0c0" />
          <Chevron dir="right" color="#c0c0c0" />
        </div>
      </div>
      <div className="h-[3px] border-b border-t border-b-[#696969] border-t-[#d0d0d0]" />
      <label className="flex h-[18px] items-center text-[#404040]">
        <span className="w-4 shrink-0 pl-[7px]">&gt;</span>
        <input aria-label="Command line" className="h-full min-w-0 grow bg-white" />
      </label>
      <p className="h-[23px] overflow-hidden whitespace-nowrap border-b border-r border-t border-b-[#a0a0a0] border-r-[#696969] border-t-[#d8d8d8] pl-0.5 leading-[19px]">
        ASSIGN BreakDisable BreakEnable BreakKill BreakList BreakSet BreakAccess COVERAGE COVTOFILE DEFINE DIR Display Enter
      </p>
    </div>
  </section>
);

const Gem = () => (
  <svg viewBox="0 0 9 11" className="h-[11px] w-[9px] shrink-0" aria-hidden="true">
    <path d="M4 2.5 L8 0.5 L8.5 5 L4.5 10.5 L4 6 Z" fill="#1f56a8" />
    <path d="M0.5 4 L4 0 L8 1 L4.3 6 L4.5 10.5 L0.8 7.5 Z" fill="#8fbdf0" />
    <path d="M4.3 5.8 L8.2 1 L8.6 5 L4.6 10.6 Z" fill="#1f56a8" />
  </svg>
);

const WatchGuide = ({ last }) => (
  <svg viewBox="0 0 14 19" className="h-[19px] w-3.5 shrink-0" fill="none" shapeRendering="crispEdges" aria-hidden="true">
    <path d={"M0.5 0 V" + (last ? 10 : 19) + " M0 9.5 H14"} stroke="#a0a0a0" strokeDasharray="1 1" />
  </svg>
);

const Watch = () => (
  <section className="flex min-w-0 grow flex-col">
    <DockHead title="Watch 1" />
    <div className="mt-0.5 min-h-0 grow border-l border-t border-[#b4b4b4] bg-white pl-px pt-0.5 text-[11px]">
      <table className="w-full table-fixed border-collapse">
        <colgroup>
          <col className="w-[200px]" />
          <col className="w-[133px]" />
          <col className="w-[133px]" />
          <col />
        </colgroup>
        <thead>
          <tr className="h-[23px] border-b border-[#b4b4b4] text-left">
            <th className="border-r border-[#dcdcdc] p-0 pl-[5px] font-normal">Name</th>
            <th className="border-r border-[#dcdcdc] p-0 pl-[5px] font-normal">Value</th>
            <th className="border-r border-[#dcdcdc] p-0 pl-[5px] font-normal">Type</th>
            <td />
          </tr>
        </thead>
        <tbody>
          {[["a", "0x0000001F", "int"], ["c", "0x1F", "uchar"]].map(([name, value, type]) => (
            <tr key={name} className="h-5">
              <td className="p-0">
                <div className="flex h-[19px] items-center pl-[11px] leading-[19px]">
                  <WatchGuide />
                  <span className="ml-[3px] mr-1">
                    <Gem />
                  </span>
                  <span className="grow bg-[#f0f0f0] pl-[3px]">{name}</span>
                </div>
              </td>
              <td className="border border-[#a0a0a0] bg-[#00a89d] p-0 pl-[3px]">{value}</td>
              <td className="border border-[#a0a0a0] bg-[#f0f0f0] p-0 pl-[3px]">{type}</td>
              <td />
            </tr>
          ))}
          <tr className="h-5">
            <td className="p-0">
              <div className="flex h-[19px] items-center pl-[11px]">
                <WatchGuide last />
                &lt;Enter expression&gt;
              </div>
            </td>
            <td className="border border-[#a0a0a0]" />
            <td className="border border-[#a0a0a0]" />
            <td />
          </tr>
        </tbody>
      </table>
    </div>
    <DockTabs tabs={[["callStack", "Call Stack + Locals"], [null, "Watch 1", true], ["memory", "Memory 1"]]} />
  </section>
);

/* ---------- taskbar ---------- */

const KeilLogo = ({ className }) => (
  <svg viewBox="0 0 22 22" className={className} aria-hidden="true">
    <rect width="22" height="22" rx="2" fill="#2a6b3e" />
    <path d="M2.5 3 H17.5 L12 18 H9.5 Z" fill="#fff" />
    <path d="M8 4.5 V11 M8 9.5 C9 10.8 11 10.5 11.6 9.3 V4.5" stroke="#2a6b3e" strokeWidth="1.6" fill="none" />
    <path d="M19 12.8 H15.5 V15.5 C18 15 19.4 16 18.8 17.8 C18.2 19 16.3 19.2 15 18.4" stroke="#fff" strokeWidth="1.3" fill="none" />
  </svg>
);

const taskApps = [
  ["Edge", (
    <svg viewBox="0 0 24 24" className="h-[22px] w-[22px]" aria-hidden="true">
      <path d="M1 11.5 C2 4 7 0.5 12.6 0.5 C19.5 0.5 23.3 5.6 23.3 11 V14 H8.2 C8.4 20 16.5 20.7 21.6 17.4 V22 C14.5 25.8 3.5 24 3.5 14.8 C3.5 11.3 5.4 8.6 8.2 7.1 C6 7.6 3 8.6 1 11.5 Z M8.3 10 H17.4 C17.4 7 15.7 5.3 13 5.3 C10.3 5.3 8.6 7.4 8.3 10 Z" fill="#0a7bdc" fillRule="evenodd" />
    </svg>
  )],
  ["File Explorer", (
    <svg viewBox="0 0 24 22" className="h-[22px] w-6" aria-hidden="true">
      <path d="M1 2 H9 L11 4.5 H23 V20 H1 Z" fill="#f8cf5f" />
      <path d="M1 2 H9 L11 4.5 H1 Z" fill="#d99a1c" />
      <path d="M5 20 V12 H19 V20 H15.5 V16 H8.5 V20 Z" fill="#3a97e0" />
    </svg>
  )],
  ["Acrobat", (
    <svg viewBox="0 0 22 22" className="h-[22px] w-[22px]" aria-hidden="true">
      <rect width="22" height="22" rx="1.5" fill="#9c0808" />
      <path d="M0 1.5 C0 0.5 0.5 0 1.5 0 H20.5 C21.5 0 22 0.5 22 1.5 V12 H0 Z" fill="#cf1414" />
      <path d="M5 16.5 C9 14.5 11.5 8.5 11 5.5 C10.3 3.5 9.3 5.8 10.5 8.5 C12 12.5 15 14.6 17.5 13.6 C18 12 12.5 12 8.5 13.6 C6.5 14.4 4.6 15.8 5 16.5 Z" fill="none" stroke="#fff" strokeWidth="1.1" />
    </svg>
  )],
  ["TextPad", (
    <svg viewBox="0 0 24 24" className="h-6 w-6" aria-hidden="true">
      <path d="M1 1 H23 V6.5 H20 V5 H15.5 V21 H17.5 V23 H9 V21 H11 V5 H4 V6.5 H1 Z" fill="#3f95d8" stroke="#0f2c80" />
      <path d="M2.5 9.5 H11 L13 22.5 H3 Z" fill="#f5f2e6" stroke="#222" strokeWidth="0.8" />
      <path d="M4 13.5 H8 M4 16 H9 M4.5 19 H8" stroke="#333" />
      <path d="M8 12 L17 19 L19 17.5 L10 11 Z" fill="#f5a51d" stroke="#6b3b00" strokeWidth="0.6" />
    </svg>
  )],
  ["uVision", <KeilLogo className="h-[22px] w-[22px]" />],
  ["Paint", (
    <svg viewBox="0 0 24 24" className="h-6 w-6" aria-hidden="true">
      <ellipse cx="11" cy="14" rx="10" ry="8.5" fill="#cfe6f5" stroke="#6d9ebd" />
      <circle cx="5" cy="13.5" r="1.8" fill="#e03e3e" />
      <circle cx="8.5" cy="9.5" r="1.8" fill="#5cba3c" />
      <circle cx="13.5" cy="8.5" r="1.8" fill="#f2c41d" />
      <circle cx="10.5" cy="15" r="1.8" fill="#333" />
      <path d="M20.5 5 L13 22" stroke="#d98a3a" strokeWidth="2.4" />
      <path d="M19 6 L19.5 1.5 L23 0.5 L22.5 6 Z" fill="#b9793f" />
    </svg>
  )],
];

const Taskbar = () => (
  <footer className="flex h-10 shrink-0 items-stretch bg-[#3f4347] text-white">
    <button type="button" aria-label="Start" className="flex w-12 items-center justify-center">
      <svg viewBox="0 0 16 16" className="h-4 w-4" aria-hidden="true">
        <path d="M0 2.2 L7 1.2 V7.5 H0 Z M8 1.1 L16 0 V7.5 H8 Z M0 8.5 H7 V14.8 L0 13.8 Z M8 8.5 H16 V16 L8 14.9 Z" fill="#fff" />
      </svg>
    </button>
    <label className="flex w-[344px] items-center gap-3 border border-[#b8b8b8] bg-[#f2f2f2] pl-[11px]">
      <svg viewBox="0 0 16 16" className="h-4 w-4 shrink-0" fill="none" aria-hidden="true">
        <circle cx="10" cy="6" r="5" stroke="#222" strokeWidth="1.3" />
        <path d="M6.3 9.7 L0.8 15.2" stroke="#222" strokeWidth="1.3" />
      </svg>
      <input aria-label="Search" placeholder="Type here to search" className="min-w-0 grow pt-px text-sm placeholder:text-[#444]" />
    </label>
    <button type="button" aria-label="Cortana" className="flex w-12 items-center justify-center">
      <svg viewBox="0 0 16 16" className="h-4 w-4" fill="none" aria-hidden="true">
        <circle cx="8" cy="8" r="6.8" stroke="#fff" strokeWidth="2" />
      </svg>
    </button>
    <button type="button" aria-label="Task view" className="mr-[3px] flex w-12 items-center justify-center">
      <svg viewBox="0 0 16 16" className="h-4 w-4" fill="none" aria-hidden="true">
        <path d="M0.5 0 V2.5 H10.5 V0 M0.5 16 V13.5 H10.5 V16 M0.5 5 H10.5 V11 H0.5 Z M14 0 V3 M14 8.5 V16" stroke="#fff" strokeWidth="1.2" />
        <path d="M12.5 4.5 H15.5 V7.5 H12.5 Z" fill="#fff" />
      </svg>
    </button>
    <div className="flex gap-px">
      {taskApps.map(([name, icon]) => (
        <button key={name} type="button" aria-label={name} className={(name === "uVision" ? "bg-[#686b6e] " : "") + "flex w-12 flex-col items-center"}>
          <span className="flex grow items-center">{icon}</span>
          <span className={(name === "uVision" ? "w-12 " : "w-10 ") + "flex h-0.5 justify-end bg-[#76b9ed]"}>
            {name === "Acrobat" && <span className="w-2 bg-[#5584aa]" />}
          </span>
        </button>
      ))}
    </div>
    <div className="ml-auto flex items-center">
      <svg viewBox="0 0 12 8" className="h-2 w-3" fill="none" aria-hidden="true">
        <path d="M1 7 L6 1.5 L11 7" stroke="#fff" strokeWidth="1.3" />
      </svg>
      <svg viewBox="0 0 16 10" className="ml-2.5 h-2.5 w-4" aria-hidden="true">
        <path d="M3.5 10 C0 10 -0.5 6 2.5 5 C2.5 1 7.5 -0.8 9.5 2.3 C12 1.5 13.8 3.4 13.5 5.2 C16.8 5.6 16.4 10 13.3 10 Z" fill="#f2f2f2" />
      </svg>
      <svg viewBox="0 0 16 14" className="ml-2 h-3.5 w-4" fill="none" aria-hidden="true">
        <path d="M0.6 4.8 H3 L6.5 1.5 V12.5 L3 9.2 H0.6 Z M8.8 4.8 C9.9 6.2 9.9 7.8 8.8 9.2 M11 3 C13 5.4 13 8.6 11 11 M13.2 1.2 C16 4.6 16 9.4 13.2 12.8" stroke="#fff" strokeWidth="1.1" />
      </svg>
      <div className="ml-2.5 w-[52px] text-center text-[11px] leading-[18px]">
        <p>12:49 PM</p>
        <p>6/24/2020</p>
      </div>
      <button type="button" aria-label="1 notification" className="ml-[18px] mr-3">
        <svg viewBox="0 0 24 24" className="h-6 w-6" aria-hidden="true">
          <path d="M0 0.5 H16 V13 H7 L4 16.5 V13 H0 Z" fill="#fff" />
          <path d="M3 4 H13 M3 7 H13 M3 10 H10" stroke="#3f4347" />
          <circle cx="15.5" cy="15.5" r="7.5" fill="#3f4347" stroke="#ccc" />
          <text x="15.5" y="19.5" fill="#fff" fontSize="11" textAnchor="middle">1</text>
        </svg>
      </button>
      <span className="mr-1 h-10 w-px bg-[#77797c]" />
    </div>
  </footer>
);

/* ---------- page ---------- */

const menus = ["File", "Edit", "View", "Project", "Flash", "Debug", "Peripherals", "Tools", "SVCS", "Window", "Help"];

const keyStates = [["CAP", "w-[26px]"], ["NUM", "w-8"], ["SCRL", "w-[31px]"], ["OVR", "w-[29px]"], ["R/W", "w-7"]];

export default function App() {
  return (
    <div className="flex h-screen min-h-[1080px] flex-col overflow-hidden bg-white font-['Noto_Sans',sans-serif] text-[11px] text-black">
      <header className="flex h-[23px] shrink-0 items-center pl-0.5">
        <KeilLogo className="h-4 w-4" />
        <h1 className="ml-[5px] whitespace-pre font-['Roboto',sans-serif] text-xs">{"C:\\training\\keil\\ex_book\\Examples\\3.1 Saturated\\Saturation.uvprojx - µVision  [Non-Commercial Use License]"}</h1>
        <div className="ml-auto mr-5 flex items-center gap-[35px] pb-1">
          <button type="button" aria-label="Minimize">
            <svg viewBox="0 0 10 10" className="h-2.5 w-2.5" shapeRendering="crispEdges" aria-hidden="true">
              <path d="M0 5.5 H10" stroke="#000" />
            </svg>
          </button>
          <button type="button" aria-label="Restore">
            <svg viewBox="0 0 10 10" className="h-2.5 w-2.5" fill="none" shapeRendering="crispEdges" aria-hidden="true">
              <path d="M0.5 2.5 H7.5 V9.5 H0.5 Z M2.5 2 V0.5 H9.5 V7.5 H8" stroke="#000" />
            </svg>
          </button>
          <button type="button" aria-label="Close">
            <svg viewBox="0 0 10 10" className="h-2.5 w-2.5" aria-hidden="true">
              <path d="M0 0 L10 10 M10 0 L0 10" stroke="#000" strokeWidth="1.2" />
            </svg>
          </button>
        </div>
      </header>
      <nav className="flex h-[22px] shrink-0 items-center gap-[15px] pl-[9px]">
        {menus.map((m) => (
          <button key={m} type="button" className="text-[11px] leading-4">{m}</button>
        ))}
      </nav>
      <div className="flex shrink-0 flex-col border-t border-[#b4b4b4]">
        <Toolbar items={fileTools} />
        <Toolbar items={debugTools} />
      </div>
      <main className="flex min-h-0 grow gap-1">
        <Registers />
        <div className="flex min-w-0 grow flex-col">
          <LogicAnalyzer />
          <Editor />
        </div>
      </main>
      <div className="mt-1 flex h-[155px] shrink-0 gap-1">
        <Command />
        <Watch />
      </div>
      <div className="flex h-[18px] shrink-0 items-center justify-end border-t border-[#d7d7d7] bg-[#f0f0f0] pr-1 leading-[17px]">
        <span className="w-[178px] border-l border-[#d0d0d0] pl-1">Simulation</span>
        <span className="w-[137px] border-l border-[#d0d0d0] pl-4">t1: 2.60581468 sec</span>
        <span className="w-[93px] border-l border-[#d0d0d0] pl-1">L:28 C:1</span>
        {keyStates.map(([k, w]) => (
          <span key={k} className={w + " border-l border-[#d0d0d0] pr-px text-right text-[#808080]"}>{k}</span>
        ))}
      </div>
      <Taskbar />
    </div>
  );
}
